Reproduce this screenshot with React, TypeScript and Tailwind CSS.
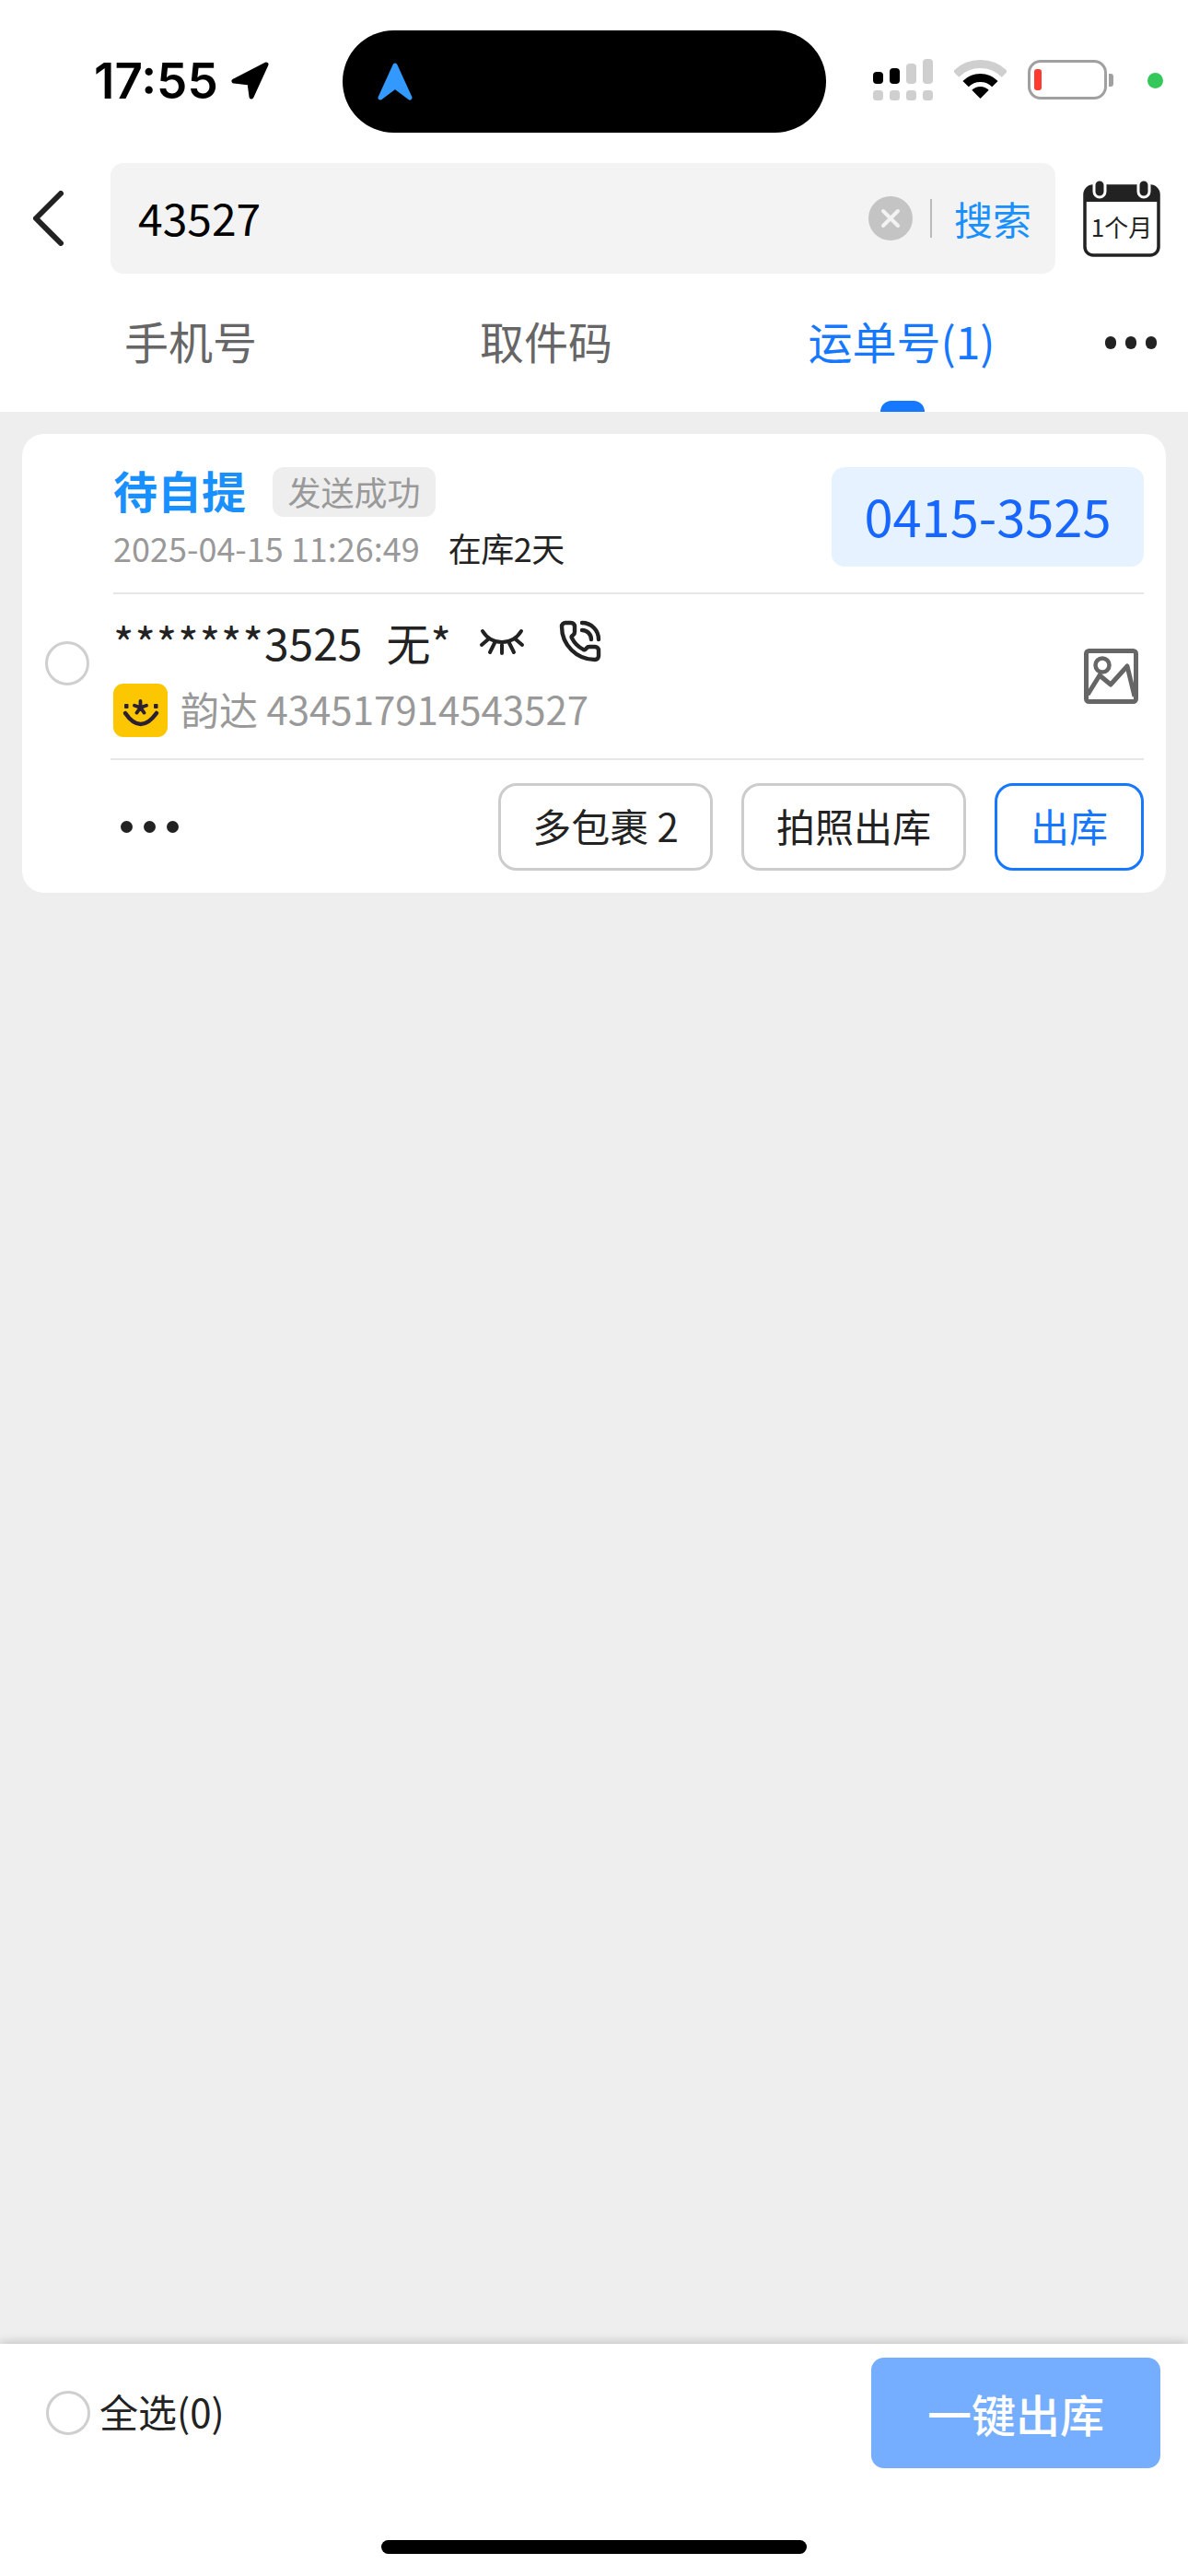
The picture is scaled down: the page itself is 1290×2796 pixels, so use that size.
import { PhoneCall } from "lucide-react";

// signal meter: heights of the upper bars, the first two are active
const signalBars = [
    { x: 0, y: 14, h: 13, fill: "#000000" },
    { x: 18, y: 10, h: 17, fill: "#000000" },
    { x: 36, y: 5, h: 22, fill: "#cfcfcf" },
    { x: 54, y: 0, h: 27, fill: "#cfcfcf" },
];

function StatusBar() {
    return (
        <div className="flex h-[177px] shrink-0 items-start bg-white pl-[102px]">
            <span className="mt-[58px] w-[136px] font-['Inter',sans-serif] text-[53px] leading-[60px] font-semibold whitespace-nowrap text-black">
                17:55
            </span>
            <svg className="mt-[67px] ml-[13px] shrink-0" width="41" height="41" viewBox="0 0 41 41">
                <path d="M38 3 3 21 20 23 22 38Z" fill="#000" stroke="#000" strokeWidth="5" strokeLinejoin="round" />
            </svg>
            <div className="mt-[33px] ml-[80px] flex h-[111px] w-[525px] shrink-0 items-center rounded-[56px] bg-black pl-[38px]">
                <svg width="38" height="41" viewBox="0 0 38 41">
                    <path d="M19 3 3 38 19 26 35 38Z" fill="#3399ff" stroke="#3399ff" strokeWidth="5" strokeLinejoin="round" />
                </svg>
            </div>
            <svg className="mt-[64px] ml-[51px] shrink-0" width="65" height="45" viewBox="0 0 65 45">
                {signalBars.map((bar) => (
                    <g key={bar.x}>
                        <rect x={bar.x} y={bar.y} width="11" height={bar.h} rx="4" fill={bar.fill} />
                        <rect x={bar.x} y="34" width="11" height="11" rx="3.5" fill="#cfcfcf" />
                    </g>
                ))}
            </svg>
            <svg className="mt-[65px] ml-[23px] shrink-0" width="57" height="42" viewBox="0 0 57 42">
                <path d="M2 15.5A37.5 37.5 0 0 1 55 15.5" fill="none" stroke="#cfcfcf" strokeWidth="9" />
                <path d="M12.6 26.1A22.5 22.5 0 0 1 44.4 26.1" fill="none" stroke="#000" strokeWidth="9" />
                <path d="M28.5 42 19.3 32.8A13 13 0 0 1 37.7 32.8Z" fill="#000" />
            </svg>
            <div className="mt-[65px] ml-[23px] flex h-[43px] w-[86px] shrink-0 items-center rounded-[14px] border-[3px] border-[#a0a0a0] pl-[4px]">
                <div className="h-[23px] w-[8px] rounded-[3px] bg-[#ff3b30]" />
            </div>
            <div className="mt-[80px] ml-[2px] h-[14px] w-[5px] shrink-0 rounded-r-[3px] bg-[#a0a0a0]" />
            <div className="mt-[79px] ml-[37px] h-[17px] w-[17px] shrink-0 rounded-full bg-[#34c759]" />
        </div>
    );
}

function SearchRow() {
    return (
        <div className="flex h-[120px] shrink-0 items-center bg-white pl-[36px]">
            <svg className="shrink-0" width="33" height="60" viewBox="0 0 33 60">
                <path d="M30 3 3 30 30 57" fill="none" stroke="#222" strokeWidth="6" strokeLinecap="round" strokeLinejoin="round" />
            </svg>
            <div className="ml-[51px] flex h-[120px] w-[1026px] shrink-0 items-center rounded-[14px] bg-[#f3f3f3] pr-[26px] pl-[30px]">
                <span className="pb-[5px] text-[48px] text-black">43527</span>
                <div className="ml-auto flex h-[48px] w-[48px] items-center justify-center rounded-full bg-[#c4c4c4]">
                    <svg width="22" height="22" viewBox="0 0 22 22">
                        <path d="M3 3 19 19M19 3 3 19" stroke="#f3f3f3" strokeWidth="4" strokeLinecap="round" />
                    </svg>
                </div>
                <div className="ml-[19px] h-[42px] w-[2px] bg-[#bbbbbb]" />
                <span className="ml-[24px] pb-[2px] text-[42px] text-[#1890ff]">搜索</span>
            </div>
            <div className="relative ml-[30px] h-[84px] w-[84px] shrink-0">
                <svg width="84" height="84" viewBox="0 0 84 84">
                    <rect x="2" y="7" width="80" height="75" rx="9" fill="#fff" stroke="#222" strokeWidth="3.5" />
                    <path d="M2 24V14a7 7 0 0 1 7-7h66a7 7 0 0 1 7 7v10Z" fill="#222" />
                    <rect x="12" y="0" width="12" height="19" rx="6" fill="#222" stroke="#fff" strokeWidth="3" />
                    <rect x="60" y="0" width="12" height="19" rx="6" fill="#222" stroke="#fff" strokeWidth="3" />
                </svg>
                <span className="absolute inset-x-0 top-[33px] text-center text-[26px] leading-[36px] text-[#222]">1个月</span>
            </div>
        </div>
    );
}

function TabRow() {
    return (
        <div className="relative flex h-[150px] shrink-0 items-center bg-white pl-[14px]">
            <div className="w-[386px] pb-[6px] text-center text-[48px] text-[#666666]">手机号</div>
            <div className="w-[386px] pb-[6px] text-center text-[48px] text-[#666666]">取件码</div>
            <div className="w-[386px] pb-[6px] text-center text-[48px] text-[#1677ff]">运单号(1)</div>
            <div className="ml-[28px] flex gap-[10px]">
                <div className="h-[14px] w-[12px] rounded-full bg-[#222]" />
                <div className="h-[14px] w-[12px] rounded-full bg-[#222]" />
                <div className="h-[14px] w-[12px] rounded-full bg-[#222]" />
            </div>
            <div className="absolute bottom-0 left-[956px] h-[12px] w-[48px] rounded-t-[12px] bg-[#1677ff]" />
        </div>
    );
}

function Radio() {
    return <div className="h-[48px] w-[48px] shrink-0 rounded-full border-[3px] border-[#cfcfcf] bg-white" />;
}

function YundaLogo() {
    return (
        <svg className="shrink-0" width="59" height="58" viewBox="0 0 59 58">
            <rect width="59" height="58" rx="11" fill="#fcc600" />
            <path d="M13 32Q29.5 56 47 32" fill="none" stroke="#2a1f33" strokeWidth="4.5" strokeLinecap="round" />
            <rect x="12" y="22" width="4.5" height="5" rx="1" fill="#2a1f33" />
            <rect x="44" y="22" width="4.5" height="5" rx="1" fill="#2a1f33" />
            <path
                d="M29.5 26V19M29.5 26 36 23.8M29.5 26 33.5 31.6M29.5 26 25.5 31.6M29.5 26 23 23.8"
                stroke="#2a1f33"
                strokeWidth="3.8"
                strokeLinecap="round"
            />
        </svg>
    );
}

function ClosedEye() {
    return (
        <svg className="shrink-0" width="50" height="29" viewBox="0 0 50 29">
            <g fill="none" stroke="#222" strokeWidth="4" strokeLinecap="round">
                <path d="M4 3C14 19 36 19 46 3" />
                <path d="M10 12 3 18M17 16 12 26M25 18V27M33 16 38 26M40 12 47 18" />
            </g>
        </svg>
    );
}

function PictureIcon() {
    return (
        <svg className="shrink-0" width="59" height="60" viewBox="0 0 59 60">
            <rect x="2.5" y="2.5" width="54" height="55" rx="3" fill="none" stroke="#666" strokeWidth="5" />
            <circle cx="20" cy="18" r="7.5" fill="none" stroke="#666" strokeWidth="4.5" />
            <path d="M4 50 17 29 29 39 47 19 55 52" fill="none" stroke="#666" strokeWidth="5" strokeLinejoin="round" />
        </svg>
    );
}

function ParcelCard() {
    return (
        <div className="h-[498px] w-[1242px] rounded-[24px] bg-white">
            <div className="mr-[24px] ml-[99px] flex h-[174px] items-start justify-between border-b-2 border-[#e6e6e6] pt-[36px]">
                <div>
                    <div className="flex h-[54px] items-center">
                        <span className="pb-[6px] text-[48px] font-bold text-[#1890ff]">待自提</span>
                        <span className="ml-[29px] flex h-[54px] w-[177px] items-center justify-center rounded-[12px] bg-[#eeeeee] pb-[3px] text-[36px] text-[#999999]">
                            发送成功
                        </span>
                    </div>
                    <div className="mt-[13px] flex h-[40px] items-center text-[36px] leading-[40px] whitespace-nowrap">
                        <span className="text-[#999999]">2025-04-15 11:26:49</span>
                        <span className="ml-[31px] tracking-[-0.5px] text-[#222222]">在库2天</span>
                    </div>
                </div>
                <div className="flex h-[108px] w-[339px] items-center justify-center rounded-[14px] bg-[#e6f2ff] pb-[4px] text-[56px] text-[#1666ff]">
                    0415-3525
                </div>
            </div>
            <div className="flex h-[180px]">
                <div className="w-[96px] shrink-0 pt-[51px] pl-[25px]">
                    <Radio />
                </div>
                <div className="mr-[24px] flex flex-1 items-center justify-between border-b-2 border-[#e6e6e6] pr-[6px] pl-[3px]">
                    <div className="self-start pt-[21px]">
                        <div className="flex h-[60px] items-center text-[48px] leading-[60px] whitespace-nowrap text-[#222222]">
                            <span className="tracking-[1px]">*******</span>
                            <span>3525</span>
                            <span className="ml-[26px]">无*</span>
                            <span className="ml-[30px]">
                                <ClosedEye />
                            </span>
                            <PhoneCall className="ml-[36px]" size={48} strokeWidth={2.2} color="#222222" />
                        </div>
                        <div className="mt-[16px] flex h-[58px] items-center text-[42px] whitespace-nowrap text-[#999999]">
                            <YundaLogo />
                            <span className="ml-[14px] pb-[6px]">韵达 434517914543527</span>
                        </div>
                    </div>
                    <PictureIcon />
                </div>
            </div>
            <div className="mr-[24px] ml-[107px] flex h-[144px] items-center justify-between">
                <div className="flex gap-[12px]">
                    <div className="h-[13px] w-[13px] rounded-full bg-[#222]" />
                    <div className="h-[13px] w-[13px] rounded-full bg-[#222]" />
                    <div className="h-[13px] w-[13px] rounded-full bg-[#222]" />
                </div>
                <div className="flex gap-[31px]">
                    <button className="h-[95px] w-[233px] rounded-[20px] border-[3px] border-[#cccccc] pb-[3px] text-[42px] text-[#222222]">多包裹 2</button>
                    <button className="h-[95px] w-[244px] rounded-[20px] border-[3px] border-[#cccccc] pb-[3px] text-[42px] text-[#222222]">拍照出库</button>
                    <button className="h-[95px] w-[162px] rounded-[20px] border-[3px] border-[#1677ff] pb-[3px] text-[42px] text-[#1677ff]">出库</button>
                </div>
            </div>
        </div>
    );
}

function BottomBar() {
    return (
        <div className="mt-auto h-[252px] shrink-0 bg-white shadow-[0_-2px_10px_rgba(0,0,0,0.18)]">
            <div className="flex h-[150px] items-center justify-between pt-[15px] pr-[30px] pb-[15px] pl-[50px]">
                <div className="flex items-center">
                    <Radio />
                    <span className="ml-[10px] pb-[5px] text-[42px] text-[#222222]">全选(0)</span>
                </div>
                <button className="h-[120px] w-[314px] rounded-[14px] bg-[#75aeff] text-[48px] font-medium text-white">一键出库</button>
            </div>
            <div className="mx-auto mt-[63px] h-[15px] w-[462px] rounded-[8px] bg-black" />
        </div>
    );
}

export default function App() {
    return (
        <div className="flex h-[2796px] w-[1290px] flex-col overflow-hidden bg-[#eeeeee] font-['Noto_Sans_CJK_SC','Noto_Sans',sans-serif]">
            <StatusBar />
            <SearchRow />
            <TabRow />
            <div className="px-[24px] pt-[24px]">
                <ParcelCard />
            </div>
            <BottomBar />
        </div>
    );
}
